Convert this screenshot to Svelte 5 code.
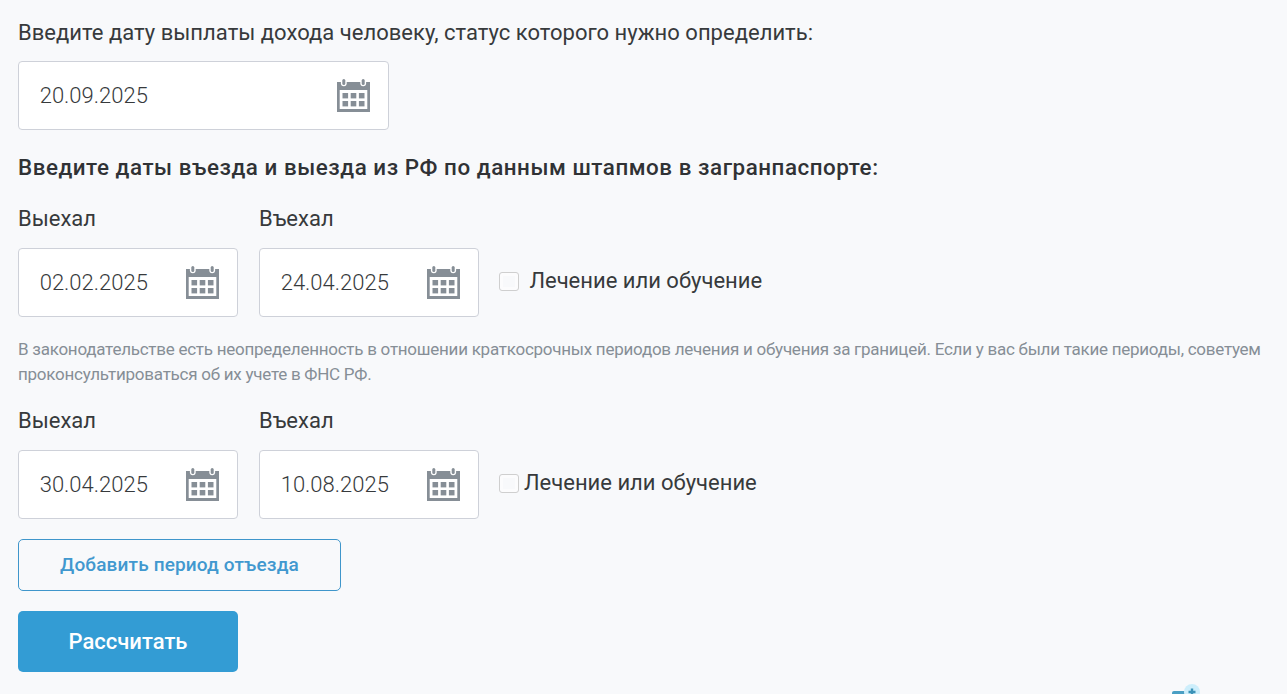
<script>
  const periods = [
    { out: '02.02.2025', back: '24.04.2025', note: true },
    { out: '30.04.2025', back: '10.08.2025', note: false }
  ];
  const columns = [5.5, 13.7, 21.9];
  const lines = [14, 22];
</script>

{#snippet calendar()}
  <svg class="cal" width="33" height="34" viewBox="0 0 33 34">
    <path fill="#868e96" fill-rule="evenodd" d="M0 3H33V33H0ZM2.7 11V30H30.3V11Z" />
    {#each [6.8, 26.2] as x}
      <rect x={x - 2.9} y="-1" width="5.8" height="8.2" rx="2.9" fill="#fff" />
      <rect x={x - 1.5} y="0" width="3" height="6" rx="1.5" fill="#868e96" />
    {/each}
    {#each lines as y}
      {#each columns as x}
        <rect {x} {y} width="5.6" height="5.4" fill="#868e96" />
      {/each}
    {/each}
  </svg>
{/snippet}

{#snippet field(value)}
  <div class="field"><span>{value}</span>{@render calendar()}</div>
{/snippet}

<main>
  <p class="lead">Введите дату выплаты дохода человеку, статус которого нужно определить:</p>
  <div class="wide">{@render field('20.09.2025')}</div>
  <h2>Введите даты въезда и выезда из РФ по данным штапмов в загранпаспорте:</h2>
  {#each periods as p}
    <div class="row">
      <div class="col"><div class="label">Выехал</div>{@render field(p.out)}</div>
      <div class="col"><div class="label">Въехал</div>{@render field(p.back)}</div>
      <div class="check" class:gap={p.note}><i></i><span>Лечение или обучение</span></div>
    </div>
    {#if p.note}
      <p class="note">В законодательстве есть неопределенность в отношении краткосрочных периодов лечения и обучения за границей. Если у вас были такие периоды, советуем проконсультироваться об их учете в ФНС РФ.</p>
    {/if}
  {/each}
  <button class="add">Добавить период отъезда</button>
  <button class="calc">Рассчитать</button>
  <svg class="widget" width="30" height="11" viewBox="0 0 30 11">
    <rect x="2" y="8" width="20" height="12" rx="2" fill="#4a9fc4" />
    <circle cx="22" cy="9" r="8" fill="#cdeefb" />
    <path d="M22 5.5V12M18.5 9H25.5" stroke="#3b93b8" stroke-width="2.4" />
  </svg>
</main>

<style>
  :global(body) { background: #f8f9fb; }
  main {
    position: relative;
    box-sizing: border-box;
    height: 694px;
    overflow: hidden;
    padding: 18px 18px 0;
    font-family: Roboto, sans-serif;
    font-size: 22px;
    line-height: 30px;
    color: #373a3c;
  }
  p, h2 { margin: 0; }
  .lead { letter-spacing: 0.02px; }
  .wide { width: 371px; margin-top: 13px; }
  .field {
    box-sizing: border-box;
    height: 69px;
    padding: 0 18px 0 20.7px;
    display: flex;
    align-items: center;
    justify-content: space-between;
    border: 1px solid #ced1d9;
    border-radius: 4px;
    background: #fff;
    font-weight: 300;
  }
  .cal { display: block; flex: none; }
  h2 {
    margin: 22px 0 22px;
    font-size: 22.4px;
    font-weight: 500;
    letter-spacing: 0.54px;
    color: #303235;
  }
  .row { display: flex; align-items: flex-end; }
  .col { width: 220px; margin-right: 21px; }
  .col + .col { margin-right: 20px; }
  .label { height: 44px; }
  .check {
    display: flex;
    align-items: center;
    gap: 5px;
    height: 69px;
    padding-bottom: 2px;
    box-sizing: border-box;
  }
  .check.gap { gap: 10.4px; }
  .check span { padding-bottom: 2px; }
  i {
    width: 20px;
    height: 19px;
    box-sizing: border-box;
    border: 1px solid #cfcfcf;
    border-radius: 3px;
    background: #f8f9fb;
    box-shadow: inset 0 0 0 3px #fcfcfd;
  }
  .note {
    margin: 20px -10px 19px 0;
    font-size: 17px;
    line-height: 25px;
    letter-spacing: -0.255px;
    color: #868e96;
  }
  button {
    display: block;
    box-sizing: border-box;
    padding: 0;
    border-radius: 5px;
    font-family: inherit;
    font-weight: 500;
  }
  .add {
    width: 323px;
    height: 52px;
    margin-top: 20px;
    padding-bottom: 2px;
    border: 1px solid #3f96cb;
    background: transparent;
    color: #4198cf;
    font-size: 19px;
    letter-spacing: 0.15px;
  }
  .calc {
    width: 220px;
    height: 61px;
    margin-top: 20px;
    border: 0;
    background: #339cd4;
    color: #fff;
    font-size: 22px;
  }
  .widget { position: absolute; right: 87px; bottom: 0; }
</style>
